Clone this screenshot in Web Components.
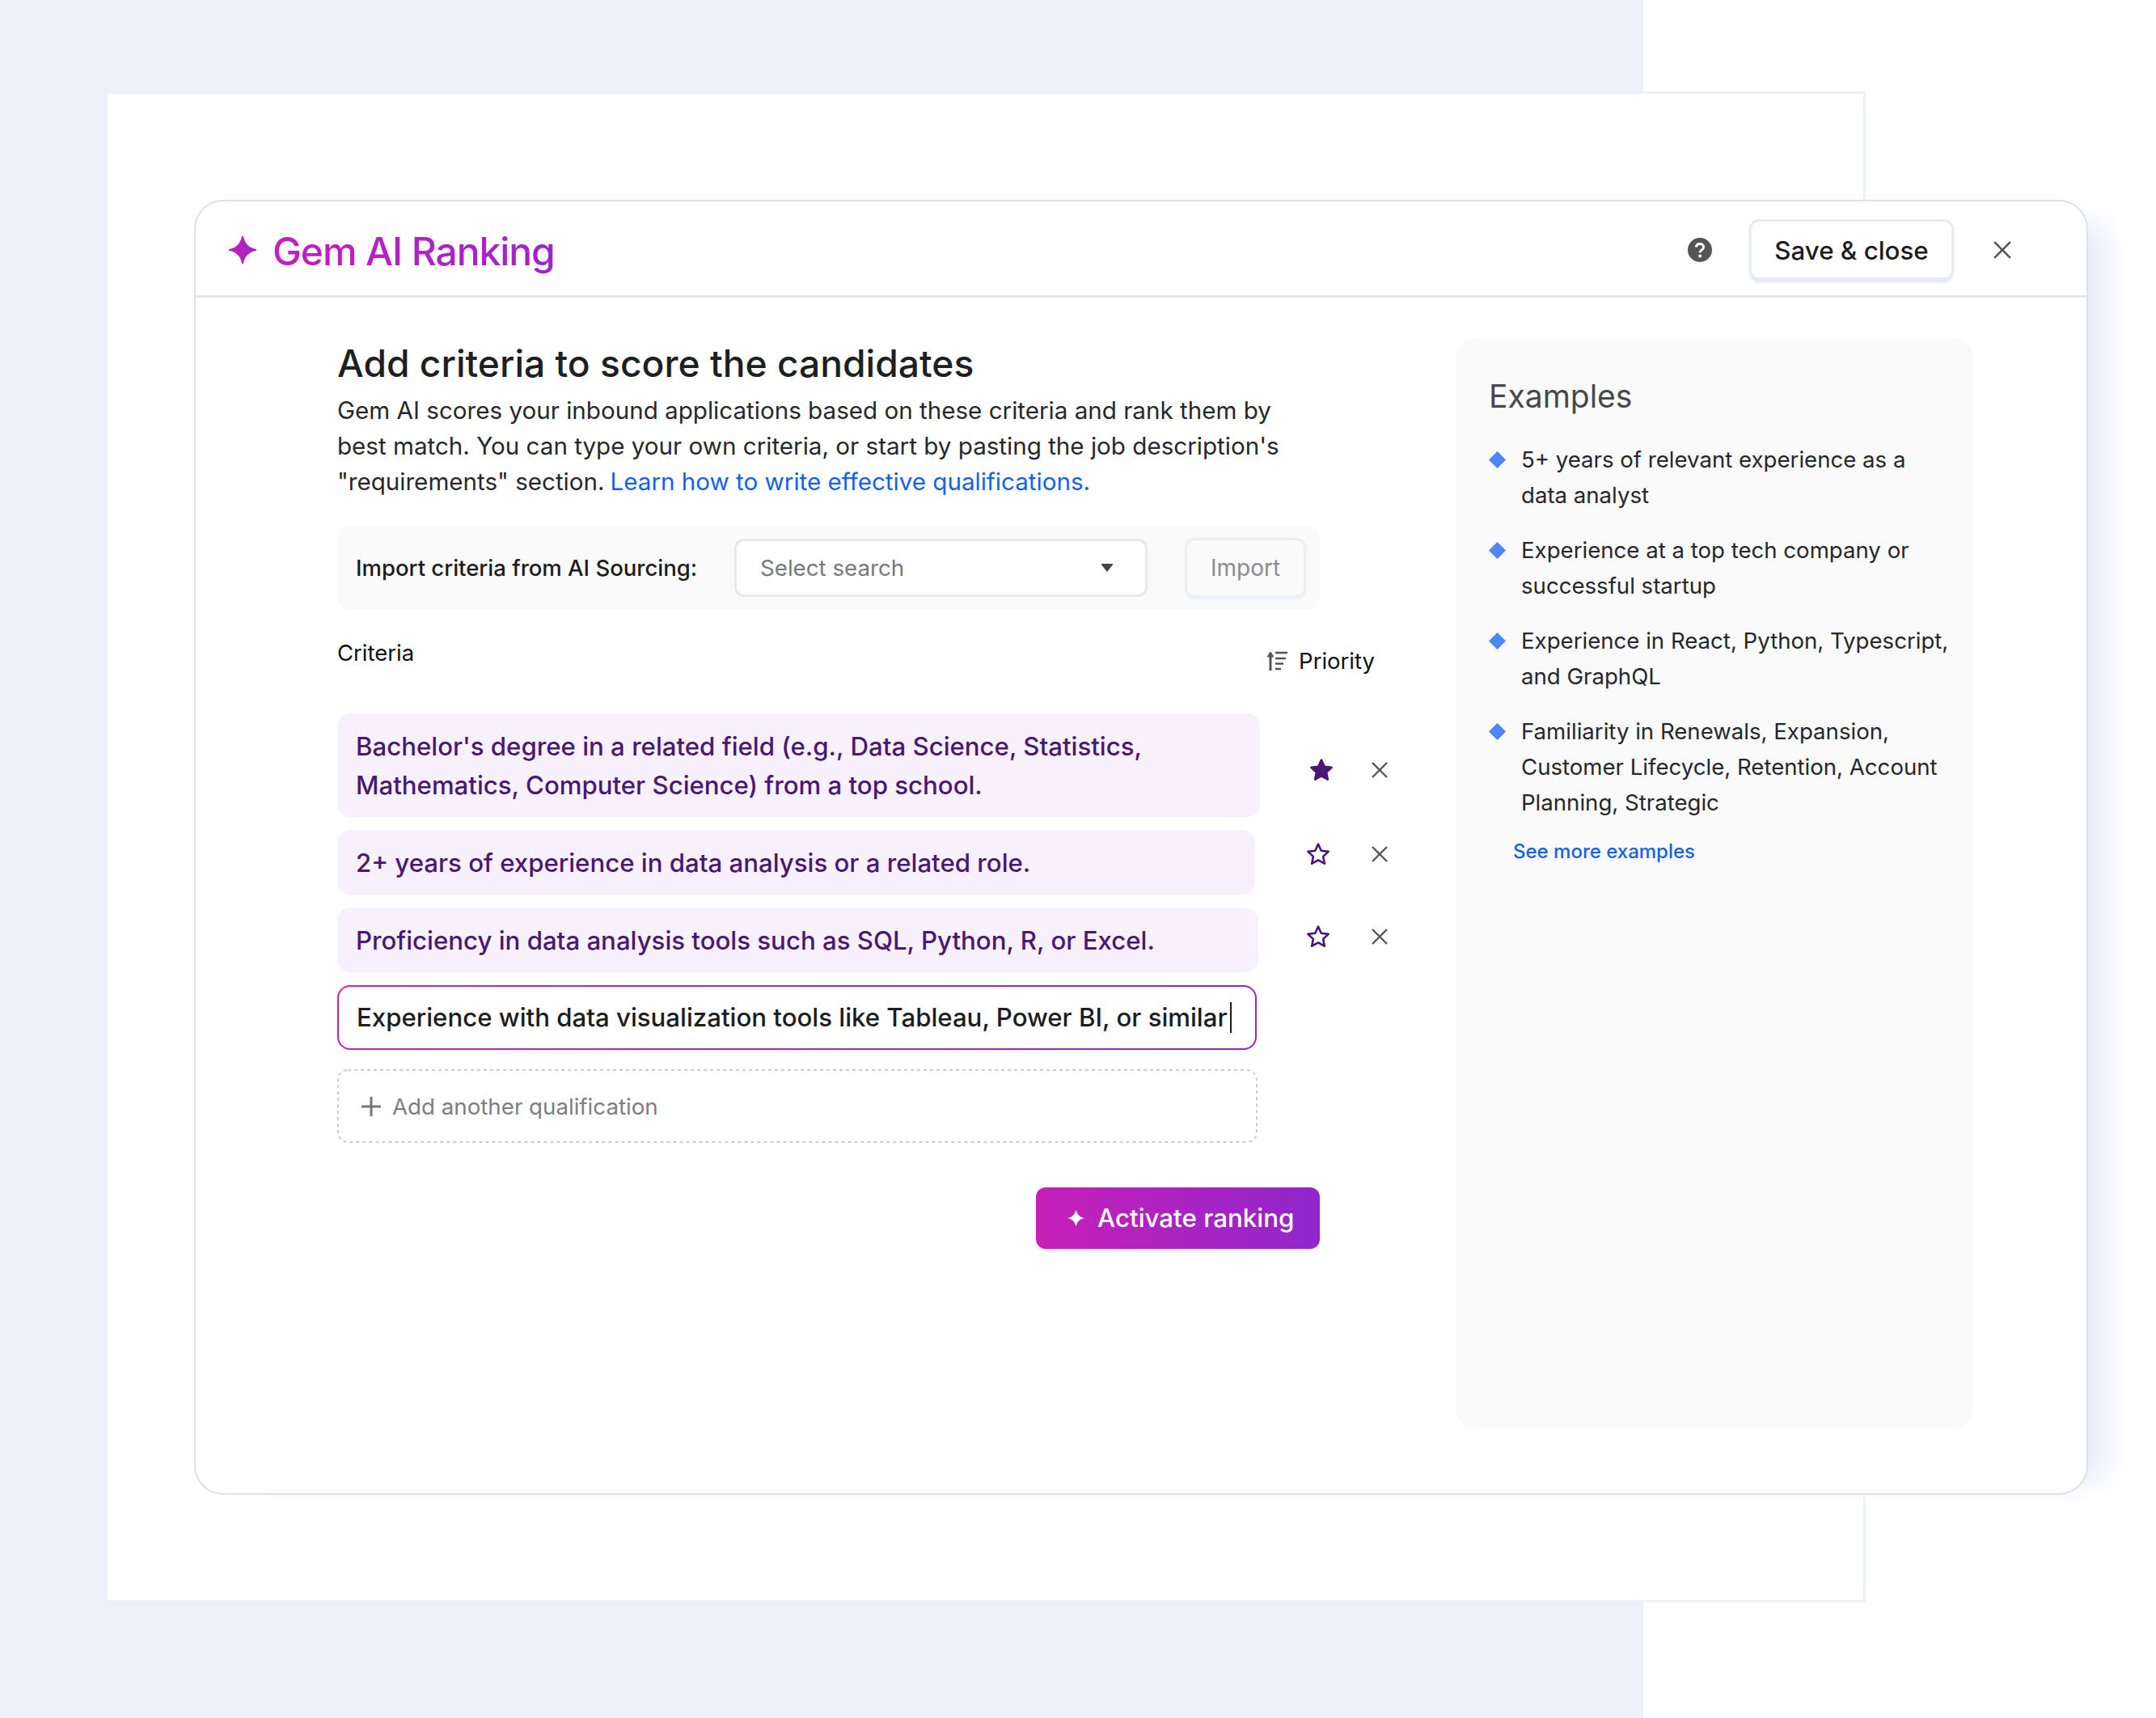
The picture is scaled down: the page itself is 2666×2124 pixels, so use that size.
<!DOCTYPE html>
<html lang="en">
<head>
<meta charset="utf-8">
<title>Gem AI Ranking</title>
<style>
  body { margin: 0; background: #fff; font-family: Inter, "Liberation Sans", sans-serif; }
</style>
</head>
<body>
<gem-stage>
  <gem-modal>
    <gem-header slot="header"></gem-header>
    <criteria-form slot="main">
      <import-bar slot="import"></import-bar>
      <criterion-row width="1141" star="filled" icon-top="55" icon-left="1201">Bachelor's degree in a related field (e.g., Data Science, Statistics,<br>Mathematics, Computer Science) from a top school.</criterion-row>
      <criterion-row width="1135" star="outline" icon-top="15" icon-left="1197">2+ years of experience in data analysis or a related role.</criterion-row>
      <criterion-row width="1139" star="outline" icon-top="21" icon-left="1197">Proficiency in data analysis tools such as SQL, Python, R, or Excel.</criterion-row>
      <active-criterion>Experience with data visualization tools like Tableau, Power BI, or similar</active-criterion>
      <add-criterion>Add another qualification</add-criterion>
      <activate-button slot="action">Activate ranking</activate-button>
    </criteria-form>
    <examples-panel slot="aside">
      <example-item>5+ years of relevant experience as a data analyst</example-item>
      <example-item>Experience at a top tech company or successful startup</example-item>
      <example-item>Experience in React, Python, Typescript, and GraphQL</example-item>
      <example-item>Familiarity in Renewals, Expansion, Customer Lifecycle, Retention, Account Planning, Strategic</example-item>
    </examples-panel>
  </gem-modal>
</gem-stage>

<script>
const SPARKLE = 'M12 0C13.2 6.6 17.4 10.800 24 12C17.4 13.200 13.2 17.400 12 24C10.800 17.400 6.6 13.200 0 12C6.6 10.800 10.800 6.6 12 0Z';
const CROSS = '<svg viewBox="0 0 20 20" width="20" height="20" fill="none" stroke="#555" stroke-width="2.4"><path d="M1 1L19 19M19 1L1 19"/></svg>';

class GemStage extends HTMLElement {
    constructor() {
        super();
        this.attachShadow({ mode: 'open' });
        this.shadowRoot.innerHTML = `
            <style>
                :host { display: grid; width: 2666px; height: 2124px; background: #fff; overflow: hidden; }
                .tint { grid-area: 1 / 1; width: 2032px; background: #eef0f9; }
                .sheet { grid-area: 1 / 1; box-sizing: border-box; width: 2174px; height: 1868px; margin: 113px 0 0 133px; background: #fff; border: 3px solid #eff1f9; border-left: 0; }
                .top { grid-area: 1 / 1; padding: 247px 0 0 240px; }
            </style>
            <div class="tint"></div>
            <div class="sheet"></div>
            <div class="top"><slot></slot></div>
        `;
    }
}

class GemModal extends HTMLElement {
    constructor() {
        super();
        this.attachShadow({ mode: 'open' });
        this.shadowRoot.innerHTML = `
            <style>
                :host { display: block; box-sizing: border-box; width: 2342px; height: 1601px; background: #fff; border: 2px solid #dfe0e8; border-radius: 36px; box-shadow: 46px 6px 34px -22px #e9edfa; }
                .body { display: grid; grid-template-columns: 1558px 640px; padding-top: 50px; }
                ::slotted([slot="header"]) { height: 119px; }
            </style>
            <slot name="header"></slot>
            <div class="body">
                <slot name="main"></slot>
                <slot name="aside"></slot>
            </div>
        `;
    }
}

class GemHeader extends HTMLElement {
    constructor() {
        super();
        this.attachShadow({ mode: 'open' });
        this.shadowRoot.innerHTML = `
            <style>
                :host { display: flex; align-items: center; box-sizing: border-box; border-bottom: 3px solid #e4e6eb; padding: 3px 0 0 41px; }
                .spark { width: 34px; height: 34px; margin-right: 20px; }
                h2 {
                    margin: 4px 0 0; font: 450 48px/66px Inter, "Liberation Sans", sans-serif; letter-spacing: -1.1px;
                    background: linear-gradient(90deg, #c41fbb, #9d25cc);
                    -webkit-background-clip: text; background-clip: text; color: transparent;
                }
                .right { margin-left: auto; display: flex; align-items: center; }
                .help { width: 30px; height: 30px; margin-right: 46px; }
                button {
                    box-sizing: border-box; width: 253px; height: 76px; padding: 3px 0 0; background: #fff; color: #1c1d20;
                    border: 3px solid #e9eaf2; border-bottom-width: 4px; border-radius: 12px; box-shadow: 0 3px 3px #e9ebf6;
                    font: 450 31.300px Inter, "Liberation Sans", sans-serif;
                }
                .close { display: flex; margin: 0 93px 0 49px; }
                .close svg { width: 22px; height: 22px; }
            </style>
            <svg class="spark" viewBox="0 0 24 24">
                <defs><linearGradient id="g"><stop offset="0" stop-color="#c41fbb"/><stop offset="1" stop-color="#9d25cc"/></linearGradient></defs>
                <path fill="url(#g)" stroke="url(#g)" stroke-width="1.2" stroke-linejoin="round" d="${SPARKLE}"/>
            </svg>
            <h2>Gem AI Ranking</h2>
            <div class="right">
                <svg class="help" viewBox="0 0 30 30">
                    <circle cx="15" cy="15" r="15" fill="#555"/>
                    <path d="M10.4 11.6C10.6 8.9 12.5 7.6 15 7.6C17.7 7.6 19.6 9.2 19.6 11.5C19.6 13.4 18.4 14.3 17 15.2C15.8 16 15.2 16.7 15.2 18.2" fill="none" stroke="#fff" stroke-width="3"/>
                    <circle cx="15.2" cy="22.6" r="2" fill="#fff"/>
                </svg>
                <button>Save &amp; close</button>
                <span class="close">${CROSS}</span>
            </div>
        `;
    }
}

class CriteriaForm extends HTMLElement {
    constructor() {
        super();
        this.attachShadow({ mode: 'open' });
        this.shadowRoot.innerHTML = `
            <style>
                :host { display: block; padding-left: 175px; color: #1c1d20; font-family: Inter, "Liberation Sans", sans-serif; }
                h1 { margin: 0; font: 450 46.200px/62px Inter, "Liberation Sans", sans-serif; color: #1e1f22; }
                .intro { margin: 5px 0 33px; font-size: 29.600px; line-height: 44px; color: #26272a; white-space: nowrap; }
                .intro div { display: flex; gap: 7px; }
                a { color: #1360ef; text-decoration: none; }
                .head { display: flex; justify-content: space-between; width: 1283px; margin: 33px 0 45px; font-size: 27.500px; line-height: 40px; color: #111; }
                .priority { display: flex; align-items: center; gap: 14px; margin-top: 10px; }
                .list { display: flex; flex-direction: column; gap: 16px; }
                .action { display: flex; justify-content: flex-end; width: 1215px; margin-top: 55px; }
            </style>
            <h1>Add criteria to score the candidates</h1>
            <div class="intro">
                <div>Gem AI scores your inbound applications based on these criteria and rank them by</div>
                <div>best match. You can type your own criteria, or start by pasting the job description's</div>
                <div><span>"requirements" section.</span><a>Learn how to write effective qualifications.</a></div>
            </div>
            <slot name="import"></slot>
            <div class="head">
                <span>Criteria</span>
                <span class="priority">
                    <svg width="26" height="24" viewBox="0 0 26 24" fill="none" stroke="#555" stroke-width="2.6">
                        <path d="M5 24V3" stroke-width="3"/><path d="M1 7L5 1L9 7Z" fill="#555" stroke-width="1"/>
                        <path d="M11 2H26M11 9H24M11 15.500H21M11 22H18"/>
                    </svg>
                    Priority
                </span>
            </div>
            <div class="list"><slot></slot></div>
            <div class="action"><slot name="action"></slot></div>
        `;
    }
}

class ImportBar extends HTMLElement {
    constructor() {
        super();
        this.attachShadow({ mode: 'open' });
        this.shadowRoot.innerHTML = `
            <style>
                :host { display: flex; align-items: center; box-sizing: border-box; width: 1215px; height: 104px; padding: 0 17px 0 23px; background: #fafafa; border-radius: 16px; }
                .label { width: 468px; color: #1c1d20; font-size: 27.500px; font-weight: 450; }
                .select { display: flex; align-items: center; justify-content: space-between; box-sizing: border-box; width: 511px; height: 72px; padding: 0 39px 0 29px; background: #fff; border: 3px solid #e8e9ef; border-radius: 12px; color: #77787e; font-size: 27.700px; }
                .select i { width: 0; height: 0; border: 8px solid transparent; border-top: 10px solid #444; border-bottom: 0; border-radius: 2px; }
                .btn { display: flex; align-items: center; justify-content: center; box-sizing: border-box; width: 150px; height: 74px; margin-left: auto; background: #fafafa; border: 3px solid #eeeff6; border-radius: 12px; box-shadow: 0 2px 2px #eceefa; color: #8b8c91; font-size: 28px; }
            </style>
            <span class="label">Import criteria from AI Sourcing:</span>
            <div class="select">Select search<i></i></div>
            <div class="btn">Import</div>
        `;
    }
}

class CriterionRow extends HTMLElement {
    constructor() {
        super();
        this.attachShadow({ mode: 'open' });
        const filled = this.getAttribute('star') === 'filled';
        const iconLeft = Number(this.getAttribute('icon-left'));
        const width = Number(this.getAttribute('width'));
        this.shadowRoot.innerHTML = `
            <style>
                :host { display: flex; align-items: flex-start; }
                .text { box-sizing: border-box; flex: none; width: ${width}px; padding: 17px 23px 15px; background: #f6f1fc; border-radius: 16px; color: #4a1772; font-size: 31.200px; font-weight: 450; line-height: 48px; }
                .icons { flex: none; display: flex; align-items: center; width: 0; height: 30px; margin-top: ${this.getAttribute('icon-top')}px; }
                .star { flex: none; margin-left: ${iconLeft - width}px; }
                .x { flex: none; margin-left: ${1247 - iconLeft}px; display: flex; }
            </style>
            <div class="text"><slot></slot></div>
            <div class="icons">
                <svg class="star" width="32" height="30" viewBox="0 0 24 23">
                    <path d="M12 2L14.900 8.300L21.700 9.100L16.700 13.700L18 20.500L12 17.100L6 20.500L7.300 13.700L2.300 9.100L9.100 8.300Z" fill="${filled ? '#4a1772' : 'none'}" stroke="#4a1772" stroke-width="2" stroke-linejoin="round"/>
                </svg>
                <span class="x">${CROSS}</span>
            </div>
        `;
    }
}

class ActiveCriterion extends HTMLElement {
    constructor() {
        super();
        this.attachShadow({ mode: 'open' });
        this.shadowRoot.innerHTML = `
            <style>
                :host { display: block; box-sizing: border-box; width: 1137px; height: 80px; padding: 2px; border-radius: 16px; background: linear-gradient(90deg, #c41fbb, #8f27cb); }
                .inner { display: flex; align-items: center; height: 76px; padding-left: 22px; background: #fff; border-radius: 14px; color: #1c1d20; font-size: 31.200px; font-weight: 450; white-space: nowrap; }
                i { flex: none; width: 2px; height: 38px; margin-left: 3px; background: #1c1d20; }
            </style>
            <div class="inner"><span><slot></slot></span><i></i></div>
        `;
    }
}

class AddCriterion extends HTMLElement {
    constructor() {
        super();
        this.attachShadow({ mode: 'open' });
        this.shadowRoot.innerHTML = `
            <style>
                :host { position: relative; display: flex; align-items: center; gap: 14px; box-sizing: border-box; width: 1138px; height: 91px; margin-top: 8px; padding-left: 30px; color: #7d7e84; font-size: 27.700px; }
                .edge { position: absolute; left: 0; top: 0; }
            </style>
            <svg class="edge" width="1138" height="91" fill="none"><rect x="1" y="1" width="1136" height="89" rx="12" stroke="#cdcdd8" stroke-width="2" stroke-dasharray="4 4"/></svg>
            <svg width="24" height="24" viewBox="0 0 24 24" stroke="#77787e" stroke-width="3"><path d="M12 0V24M0 12H24"/></svg>
            <span><slot></slot></span>
        `;
    }
}

class ActivateButton extends HTMLElement {
    constructor() {
        super();
        this.attachShadow({ mode: 'open' });
        this.shadowRoot.innerHTML = `
            <style>
                :host { display: flex; align-items: center; gap: 16px; box-sizing: border-box; width: 351px; height: 76px; padding-left: 39px; border-radius: 12px; background: linear-gradient(90deg, #c81fb8, #8f27cb); box-shadow: 0 3px 4px #e9ebf6; color: #fff; font-size: 31.300px; font-weight: 450; }
            </style>
            <svg width="21" height="24" viewBox="0 0 24 24"><path fill="#fff" d="${SPARKLE}"/></svg>
            <span><slot></slot></span>
        `;
    }
}

class ExamplesPanel extends HTMLElement {
    constructor() {
        super();
        this.attachShadow({ mode: 'open' });
        this.shadowRoot.innerHTML = `
            <style>
                :host { display: block; box-sizing: border-box; width: 640px; height: 1348px; padding: 44px 20px 0 41px; background: #fafafa; border-radius: 24px; font-family: Inter, "Liberation Sans", sans-serif; }
                h3 { margin: 0 0 28px; font: 400 39px/56px Inter, "Liberation Sans", sans-serif; color: #47484c; }
                .list { display: flex; flex-direction: column; gap: 24px; }
                a { display: block; margin: 21px 0 0 30px; color: #1360ef; font-size: 24px; font-weight: 500; line-height: 36px; }
            </style>
            <h3>Examples</h3>
            <div class="list"><slot></slot></div>
            <a>See more examples</a>
        `;
    }
}

class ExampleItem extends HTMLElement {
    constructor() {
        super();
        this.attachShadow({ mode: 'open' });
        this.shadowRoot.innerHTML = `
            <style>
                :host { display: flex; gap: 19px; color: #26272a; font-size: 27.600px; line-height: 44px; }
                svg { flex: none; margin-top: 12px; }
            </style>
            <svg width="21" height="21" viewBox="0 0 21 21"><path d="M10.500 1L20 10.500L10.500 20L1 10.500Z" fill="#4b87f8" stroke="#4b87f8" stroke-width="1.500" stroke-linejoin="round"/></svg>
            <div><slot></slot></div>
        `;
    }
}

customElements.define('gem-stage', GemStage);
customElements.define('gem-modal', GemModal);
customElements.define('gem-header', GemHeader);
customElements.define('criteria-form', CriteriaForm);
customElements.define('import-bar', ImportBar);
customElements.define('criterion-row', CriterionRow);
customElements.define('active-criterion', ActiveCriterion);
customElements.define('add-criterion', AddCriterion);
customElements.define('activate-button', ActivateButton);
customElements.define('examples-panel', ExamplesPanel);
customElements.define('example-item', ExampleItem);
</script>
</body>
</html>
